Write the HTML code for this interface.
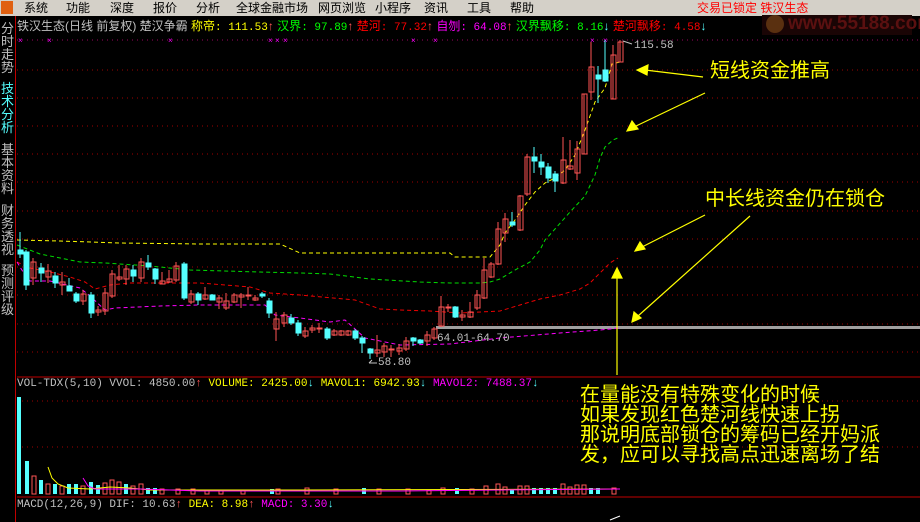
<!DOCTYPE html>
<html><head><meta charset="utf-8"><style>
html,body{margin:0;padding:0;background:#000;width:920px;height:522px;overflow:hidden;font-family:"Liberation Sans","Noto Sans CJK SC",sans-serif}
.menu{position:absolute;left:0;top:0;width:920px;height:16px;background:#d4d0c8;font-size:12px;line-height:16px;color:#000}
.menu span{position:absolute;top:0}
.side{position:absolute;left:0;top:16px;width:15px;height:506px;border-right:1px solid #c00000;color:#c0c0c0;font-size:13px;line-height:13px;text-align:center}
.side div{position:absolute;left:1px;width:13px}
.t{position:absolute;white-space:nowrap;font-family:"Liberation Mono","Noto Sans CJK SC",monospace;font-size:11px}
.ann{position:absolute;white-space:nowrap;color:#ffff00;font-size:19px;line-height:20px;font-family:"Noto Sans CJK SC",sans-serif}
</style></head><body>
<div class="menu">
<div style="position:absolute;left:1px;top:1px;width:12px;height:13px;background:#e06010"></div>
<span style="left:24px">系统</span><span style="left:66px">功能</span><span style="left:110px">深度</span><span style="left:153px">报价</span><span style="left:196px">分析</span><span style="left:236px">全球金融市场</span><span style="left:318px">网页浏览</span><span style="left:375px">小程序</span><span style="left:424px">资讯</span><span style="left:467px">工具</span><span style="left:510px">帮助</span>
</div>
<div style="position:absolute;left:762px;top:15px;width:150px;height:20px;background:#1a0505"></div>
<div style="position:absolute;left:766px;top:15px;width:18px;height:18px;border-radius:50%;background:#5a3010"></div>
<div style="position:absolute;left:788px;top:13px;font:bold 19px 'Liberation Sans',sans-serif;color:#5a1010;">www.55188.com</div>
<div style="position:absolute;left:697px;top:0;font-size:12px;line-height:16px;color:#ff0000;white-space:nowrap">交易已锁定 铁汉生态</div>
<div class="side">
<div style="top:6px">分时走势</div>
<div style="top:66px;color:#55ffff">技术分析</div>
<div style="top:127px">基本资料</div>
<div style="top:188px">财务透视</div>
<div style="top:248px">预测评级</div>
</div>
<div class="t" style="left:17px;top:17px;font-family:'Liberation Sans','Noto Sans CJK SC',sans-serif;font-size:12px;color:#c0c0c0">铁汉生态(日线 前复权) 楚汉争霸 <span style="color:#ffff00">称帝</span><span style="color:#ffff00;font-family:'Liberation Mono',monospace;font-size:11px">: 111.53</span><span style="color:#ff5555">↑</span> <span style="color:#00ff00">汉界</span><span style="color:#00ff00;font-family:'Liberation Mono',monospace;font-size:11px">: 97.89</span><span style="color:#ff5555">↑</span> <span style="color:#ff0000">楚河</span><span style="color:#ff0000;font-family:'Liberation Mono',monospace;font-size:11px">: 77.32</span><span style="color:#ff5555">↑</span> <span style="color:#ff00ff">自刎</span><span style="color:#ff00ff;font-family:'Liberation Mono',monospace;font-size:11px">: 64.08</span><span style="color:#ff5555">↑</span> <span style="color:#00ff00">汉界飘移</span><span style="color:#00ff00;font-family:'Liberation Mono',monospace;font-size:11px">: 8.16</span><span style="color:#55ffff">↓</span> <span style="color:#ff0000">楚河飘移</span><span style="color:#ff0000;font-family:'Liberation Mono',monospace;font-size:11px">: 4.58</span><span style="color:#55ffff">↓</span></div>

<svg width="920" height="522" style="position:absolute;left:0;top:0" xmlns="http://www.w3.org/2000/svg">
<g stroke="#a00000" stroke-dasharray="1 4" stroke-width="1">
<line x1="17" y1="70" x2="920" y2="70"/><line x1="17" y1="98" x2="920" y2="98"/><line x1="17" y1="126" x2="920" y2="126"/><line x1="17" y1="154" x2="920" y2="154"/><line x1="17" y1="182" x2="920" y2="182"/><line x1="17" y1="211" x2="920" y2="211"/><line x1="17" y1="239" x2="920" y2="239"/><line x1="17" y1="267" x2="920" y2="267"/><line x1="17" y1="295" x2="920" y2="295"/><line x1="17" y1="324" x2="920" y2="324"/><line x1="17" y1="352" x2="920" y2="352"/><line x1="17" y1="401" x2="920" y2="401"/><line x1="17" y1="447" x2="920" y2="447"/>
</g>
<line x1="17" y1="40" x2="920" y2="40" stroke="#a00060" stroke-dasharray="1 4"/>
<g fill="#ff00ff" font-size="8" font-family="Liberation Sans">
<text x="18" y="43">×</text><text x="47" y="43">×</text><text x="168" y="43">×</text><text x="268" y="43">×</text><text x="275" y="43">×</text><text x="283" y="43">×</text><text x="411" y="43">×</text><text x="433" y="43">×</text><text x="590" y="43">×</text><text x="603" y="43">×</text>
</g>
<line x1="17" y1="377" x2="920" y2="377" stroke="#c00000"/>
<line x1="17" y1="497" x2="920" y2="497" stroke="#c00000"/>
<rect x="436" y="326" width="484" height="3" fill="#a0a0a0"/>
<g fill="none" stroke-width="1" stroke-dasharray="4 3">
<polyline stroke="#ffff00" points="17,240 60,241 120,243 200,244 280,244 300,253 450,253 455,257 490,257 500,245 505,233 515,220 525,205 535,192 545,183 555,178 565,170 575,155 585,130 595,102 605,88 612,64 620,62"/>
<polyline stroke="#00dd00" points="17,245 40,254 80,262 105,263 150,266 190,270 260,272 300,273 330,274 370,279 420,282 450,283 480,283 490,282 500,279 515,270 530,262 540,250 545,240 555,229 570,212 585,196 595,175 600,158 605,147 613,140 620,137"/>
<polyline stroke="#ee0000" points="17,262 30,268 50,272 70,277 85,282 95,289 110,285 130,283 200,283 250,287 270,293 300,295 355,300 380,309 400,310 430,311 460,313 500,311 520,305 540,299 560,295 580,289 590,283 600,273 610,263 618,258"/>
<polyline stroke="#ff00ff" points="17,262 25,275 30,281 50,281 80,288 90,296 105,310 115,308 160,306 200,305 265,305 275,315 300,318 330,322 345,320 365,338 400,345 450,344 500,338 560,333 600,330 620,328"/>
</g>
<g stroke="#55ffff" fill="#55ffff">
<line x1="20" y1="232" x2="20" y2="258"/><rect x="18" y="250" width="5" height="4"/>
<line x1="26" y1="250" x2="26" y2="290"/><rect x="24" y="252" width="5" height="33"/>
<line x1="41" y1="263" x2="41" y2="282"/><rect x="39" y="268" width="5" height="5"/>
<line x1="55" y1="272" x2="55" y2="288"/><rect x="53" y="276" width="5" height="7"/>
<line x1="69" y1="278" x2="69" y2="291"/><rect x="67" y="286" width="5" height="5"/>
<line x1="76" y1="292" x2="76" y2="303"/><rect x="74" y="294" width="5" height="7"/>
<line x1="91" y1="292" x2="91" y2="318"/><rect x="89" y="295" width="5" height="18"/>
<line x1="133" y1="265" x2="133" y2="282"/><rect x="131" y="270" width="5" height="6"/>
<line x1="148" y1="255" x2="148" y2="270"/><rect x="146" y="263" width="5" height="4"/>
<line x1="155" y1="268" x2="155" y2="284"/><rect x="153" y="269" width="5" height="10"/>
<line x1="184" y1="262" x2="184" y2="300"/><rect x="182" y="264" width="5" height="34"/>
<line x1="198" y1="292" x2="198" y2="305"/><rect x="196" y="294" width="5" height="6"/>
<line x1="212" y1="294" x2="212" y2="300"/><rect x="210" y="295" width="5" height="5"/>
<line x1="262" y1="292" x2="262" y2="298"/><rect x="260" y="294" width="5" height="2"/>
<line x1="269" y1="298" x2="269" y2="318"/><rect x="267" y="301" width="5" height="12"/>
<line x1="291" y1="314" x2="291" y2="325"/><rect x="289" y="318" width="5" height="5"/>
<line x1="298" y1="320" x2="298" y2="336"/><rect x="296" y="323" width="5" height="10"/>
<line x1="327" y1="327" x2="327" y2="340"/><rect x="325" y="329" width="5" height="9"/>
<line x1="355" y1="329" x2="355" y2="340"/><rect x="353" y="331" width="5" height="7"/>
<line x1="362" y1="336" x2="362" y2="353"/><rect x="360" y="338" width="5" height="5"/>
<line x1="370" y1="348" x2="370" y2="359"/><rect x="368" y="349" width="5" height="4"/>
<line x1="413" y1="337" x2="413" y2="346"/><rect x="411" y="338" width="5" height="3"/>
<line x1="420" y1="339" x2="420" y2="344"/><rect x="418" y="340" width="5" height="3"/>
<line x1="455" y1="306" x2="455" y2="318"/><rect x="453" y="307" width="5" height="10"/>
<line x1="512" y1="212" x2="512" y2="227"/><rect x="510" y="222" width="5" height="3"/>
<line x1="534" y1="147" x2="534" y2="173"/><rect x="532" y="157" width="5" height="4"/>
<line x1="541" y1="154" x2="541" y2="175"/><rect x="539" y="162" width="5" height="5"/>
<line x1="548" y1="163" x2="548" y2="183"/><rect x="546" y="167" width="5" height="11"/>
<line x1="555" y1="171" x2="555" y2="192"/><rect x="553" y="174" width="5" height="7"/>
<line x1="598" y1="66" x2="598" y2="103"/><rect x="596" y="75" width="5" height="4"/>
<line x1="605" y1="40" x2="605" y2="82"/><rect x="603" y="70" width="5" height="11"/>
</g>
<g stroke="#ff5555" fill="none">
<line x1="33" y1="258" x2="33" y2="285"/><rect x="31" y="262" width="5" height="16"/>
<line x1="48" y1="264" x2="48" y2="283"/><rect x="46" y="271" width="5" height="6"/>
<line x1="62" y1="272" x2="62" y2="295"/><rect x="60" y="282" width="5" height="3"/>
<line x1="83" y1="290" x2="83" y2="305"/><rect x="81" y="294" width="5" height="7"/>
<line x1="98" y1="306" x2="98" y2="316"/><rect x="96" y="310" width="5" height="2"/>
<line x1="105" y1="288" x2="105" y2="315"/><rect x="103" y="293" width="5" height="18"/>
<line x1="112" y1="270" x2="112" y2="298"/><rect x="110" y="274" width="5" height="22"/>
<line x1="119" y1="265" x2="119" y2="281"/><rect x="117" y="277" width="5" height="2"/>
<line x1="126" y1="265" x2="126" y2="285"/><rect x="124" y="269" width="5" height="10"/>
<line x1="141" y1="258" x2="141" y2="282"/><rect x="139" y="262" width="5" height="16"/>
<line x1="162" y1="272" x2="162" y2="284"/><rect x="160" y="281" width="5" height="3"/>
<line x1="169" y1="270" x2="169" y2="283"/><rect x="167" y="279" width="5" height="3"/>
<line x1="176" y1="262" x2="176" y2="282"/><rect x="174" y="266" width="5" height="14"/>
<line x1="191" y1="290" x2="191" y2="304"/><rect x="189" y="294" width="5" height="8"/>
<line x1="205" y1="287" x2="205" y2="300"/><rect x="203" y="295" width="5" height="4"/>
<line x1="219" y1="295" x2="219" y2="309"/><rect x="217" y="298" width="5" height="4"/>
<line x1="226" y1="293" x2="226" y2="310"/><rect x="224" y="301" width="5" height="7"/>
<line x1="234" y1="293" x2="234" y2="303"/><rect x="232" y="295" width="5" height="7"/>
<line x1="241" y1="293" x2="241" y2="308"/><rect x="239" y="295" width="5" height="2"/>
<line x1="248" y1="287" x2="248" y2="300"/><rect x="246" y="295" width="5" height="1"/>
<line x1="255" y1="295" x2="255" y2="301"/><rect x="253" y="298" width="5" height="2"/>
<line x1="276" y1="312" x2="276" y2="341"/><rect x="274" y="319" width="5" height="10"/>
<line x1="284" y1="312" x2="284" y2="327"/><rect x="282" y="315" width="5" height="8"/>
<line x1="305" y1="327" x2="305" y2="338"/><rect x="303" y="331" width="5" height="5"/>
<line x1="312" y1="325" x2="312" y2="333"/><rect x="310" y="328" width="5" height="2"/>
<line x1="319" y1="323" x2="319" y2="333"/><rect x="317" y="328" width="5" height="1"/>
<line x1="334" y1="329" x2="334" y2="336"/><rect x="332" y="331" width="5" height="4"/>
<line x1="341" y1="330" x2="341" y2="336"/><rect x="339" y="331" width="5" height="4"/>
<line x1="348" y1="330" x2="348" y2="336"/><rect x="346" y="331" width="5" height="4"/>
<line x1="377" y1="335" x2="377" y2="357"/><rect x="375" y="350" width="5" height="3"/>
<line x1="384" y1="343" x2="384" y2="357"/><rect x="382" y="346" width="5" height="6"/>
<line x1="391" y1="345" x2="391" y2="357"/><rect x="389" y="349" width="5" height="1"/>
<line x1="399" y1="344" x2="399" y2="355"/><rect x="397" y="348" width="5" height="3"/>
<line x1="406" y1="337" x2="406" y2="351"/><rect x="404" y="341" width="5" height="8"/>
<line x1="427" y1="331" x2="427" y2="346"/><rect x="425" y="335" width="5" height="6"/>
<line x1="434" y1="327" x2="434" y2="340"/><rect x="432" y="329" width="5" height="9"/>
<line x1="441" y1="296" x2="441" y2="327"/><rect x="439" y="307" width="5" height="19"/>
<line x1="448" y1="304" x2="448" y2="312"/><rect x="446" y="307" width="5" height="1"/>
<line x1="462" y1="310" x2="462" y2="321"/><rect x="460" y="315" width="5" height="2"/>
<line x1="470" y1="302" x2="470" y2="318"/><rect x="468" y="312" width="5" height="5"/>
<line x1="477" y1="290" x2="477" y2="310"/><rect x="475" y="295" width="5" height="13"/>
<line x1="484" y1="258" x2="484" y2="299"/><rect x="482" y="270" width="5" height="28"/>
<line x1="491" y1="262" x2="491" y2="278"/><rect x="489" y="264" width="5" height="13"/>
<line x1="498" y1="222" x2="498" y2="265"/><rect x="496" y="229" width="5" height="35"/>
<line x1="505" y1="213" x2="505" y2="242"/><rect x="503" y="219" width="5" height="14"/>
<line x1="520" y1="195" x2="520" y2="231"/><rect x="518" y="196" width="5" height="34"/>
<line x1="527" y1="154" x2="527" y2="196"/><rect x="525" y="157" width="5" height="37"/>
<line x1="563" y1="137" x2="563" y2="184"/><rect x="561" y="160" width="5" height="23"/>
<line x1="570" y1="140" x2="570" y2="170"/><rect x="568" y="166" width="5" height="3"/>
<line x1="577" y1="141" x2="577" y2="180"/><rect x="575" y="149" width="5" height="24"/>
<line x1="584" y1="94" x2="584" y2="154"/><rect x="582" y="94" width="5" height="60"/>
<line x1="591" y1="42" x2="591" y2="100"/><rect x="589" y="67" width="5" height="25"/>
<line x1="613" y1="45" x2="613" y2="99"/><rect x="611" y="55" width="5" height="44"/>
<line x1="620" y1="40" x2="620" y2="62"/><rect x="618" y="42" width="5" height="20"/>
</g>
<g fill="#c0c0c0" font-family="Liberation Mono" font-size="11">
<text x="634" y="48">115.58</text><path d="M623,41 L632,44" stroke="#c0c0c0"/>
<text x="437" y="341">64.01-64.70</text>
<text x="378" y="365">58.80</text><path d="M369,363 L377,363 M369,363 L372,360" stroke="#c0c0c0" fill="none"/>
</g>
<g stroke="#ffff00" fill="#ffff00" stroke-width="1.2">
<line x1="703" y1="77" x2="645" y2="70"/><polygon points="637,70 648,65 647,75"/>
<line x1="705" y1="93" x2="634" y2="127"/><polygon points="627,131 632,121 638,129"/>
<line x1="705" y1="215" x2="642" y2="247"/><polygon points="635,251 640,242 645,249"/>
<line x1="750" y1="216" x2="638" y2="316"/><polygon points="632,322 634,312 641,318"/>
<line x1="617" y1="275" x2="617" y2="375"/><polygon points="617,268 612,278 622,278"/>
</g>
<g>
<rect x="17" y="397" width="4" height="97" fill="#55ffff"/>
<rect x="25" y="461" width="4" height="33" fill="#55ffff"/>
<rect x="32" y="476" width="4" height="18" fill="none" stroke="#ff5555"/>
<rect x="39" y="480" width="4" height="14" fill="#55ffff"/>
<rect x="46" y="484" width="4" height="10" fill="none" stroke="#ff5555"/>
<rect x="53" y="484" width="4" height="10" fill="#55ffff"/>
<rect x="60" y="486" width="4" height="8" fill="none" stroke="#ff5555"/>
<rect x="67" y="484" width="4" height="10" fill="#55ffff"/>
<rect x="74" y="484" width="4" height="10" fill="#55ffff"/>
<rect x="81" y="486" width="4" height="8" fill="none" stroke="#ff5555"/>
<rect x="89" y="482" width="4" height="12" fill="#55ffff"/>
<rect x="96" y="485" width="4" height="9" fill="#55ffff"/>
<rect x="103" y="483" width="4" height="11" fill="none" stroke="#ff5555"/>
<rect x="110" y="480" width="4" height="14" fill="none" stroke="#ff5555"/>
<rect x="117" y="482" width="4" height="12" fill="none" stroke="#ff5555"/>
<rect x="124" y="484" width="4" height="10" fill="#55ffff"/>
<rect x="131" y="486" width="4" height="8" fill="none" stroke="#ff5555"/>
<rect x="139" y="484" width="4" height="10" fill="none" stroke="#ff5555"/>
<rect x="146" y="488" width="4" height="6" fill="#55ffff"/>
<rect x="153" y="488" width="4" height="6" fill="#55ffff"/>
<rect x="270" y="489" width="4" height="5" fill="#55ffff"/>
<rect x="362" y="488" width="4" height="6" fill="#55ffff"/>
<rect x="455" y="488" width="4" height="6" fill="#55ffff"/>
<rect x="496" y="484" width="4" height="10" fill="none" stroke="#ff5555"/>
<rect x="503" y="487" width="4" height="7" fill="none" stroke="#ff5555"/>
<rect x="510" y="489" width="4" height="5" fill="#55ffff"/>
<rect x="518" y="486" width="4" height="8" fill="none" stroke="#ff5555"/>
<rect x="525" y="486" width="4" height="8" fill="none" stroke="#ff5555"/>
<rect x="532" y="488" width="4" height="6" fill="#55ffff"/>
<rect x="539" y="488" width="4" height="6" fill="#55ffff"/>
<rect x="546" y="488" width="4" height="6" fill="#55ffff"/>
<rect x="553" y="488" width="4" height="6" fill="#55ffff"/>
<rect x="561" y="484" width="4" height="10" fill="none" stroke="#ff5555"/>
<rect x="568" y="487" width="4" height="7" fill="none" stroke="#ff5555"/>
<rect x="575" y="485" width="4" height="9" fill="none" stroke="#ff5555"/>
<rect x="582" y="485" width="4" height="9" fill="none" stroke="#ff5555"/>
<rect x="589" y="488" width="4" height="6" fill="#55ffff"/>
<rect x="596" y="488" width="4" height="6" fill="#55ffff"/>
<rect x="612" y="488" width="4" height="6" fill="none" stroke="#ff5555"/>
</g>
<g stroke="#ff5555" fill="none">
<rect x="160" y="489" width="4" height="5"/><rect x="176" y="489" width="4" height="5"/><rect x="191" y="489" width="4" height="5"/><rect x="205" y="490" width="4" height="4"/><rect x="219" y="490" width="4" height="4"/><rect x="241" y="490" width="4" height="4"/><rect x="276" y="489" width="4" height="5"/><rect x="305" y="488" width="4" height="6"/><rect x="334" y="489" width="4" height="5"/><rect x="377" y="489" width="4" height="5"/><rect x="406" y="489" width="4" height="5"/><rect x="427" y="490" width="4" height="4"/><rect x="441" y="488" width="4" height="6"/><rect x="470" y="489" width="4" height="5"/><rect x="484" y="486" width="4" height="8"/>
</g>
<polyline fill="none" stroke="#ffff00" points="48,467 52,478 58,484 68,488 90,489 110,487 130,488 150,490 300,490 620,489"/>
<polyline fill="none" stroke="#ff00ff" points="83,478 88,486 95,489 140,489 200,491 400,491 500,490 620,489"/>
<polyline fill="none" stroke="#ffffff" points="610,520 620,516"/>
</svg>

<div class="t" style="left:17px;top:378px;color:#c0c0c0">VOL-TDX(5,10) VVOL: 4850.00<span style="color:#ff5555">↑</span> <span style="color:#ffff00">VOLUME: 2425.00<span style="color:#55ffff">↓</span> MAVOL1: 6942.93<span style="color:#55ffff">↓</span></span> <span style="color:#ff00ff">MAVOL2: 7488.37<span style="color:#55ffff">↓</span></span></div>
<div class="t" style="left:17px;top:499px;color:#c0c0c0">MACD(12,26,9) DIF: 10.63<span style="color:#ff5555">↑</span> <span style="color:#ffff00">DEA: 8.98</span><span style="color:#ff5555">↑</span> <span style="color:#ff00ff">MACD: 3.30<span style="color:#55ffff">↓</span></span></div>

<div class="ann" style="left:710px;top:59px;font-size:20px">短线资金推高</div>
<div class="ann" style="left:705px;top:187px;font-size:20px">中长线资金仍在锁仓</div>
<div class="ann" style="left:580px;top:383px;font-size:20px">在量能没有特殊变化的时候<br>如果发现红色楚河线快速上拐<br>那说明底部锁仓的筹码已经开妈派<br>发，应可以寻找高点迅速离场了结</div>
</body></html>
